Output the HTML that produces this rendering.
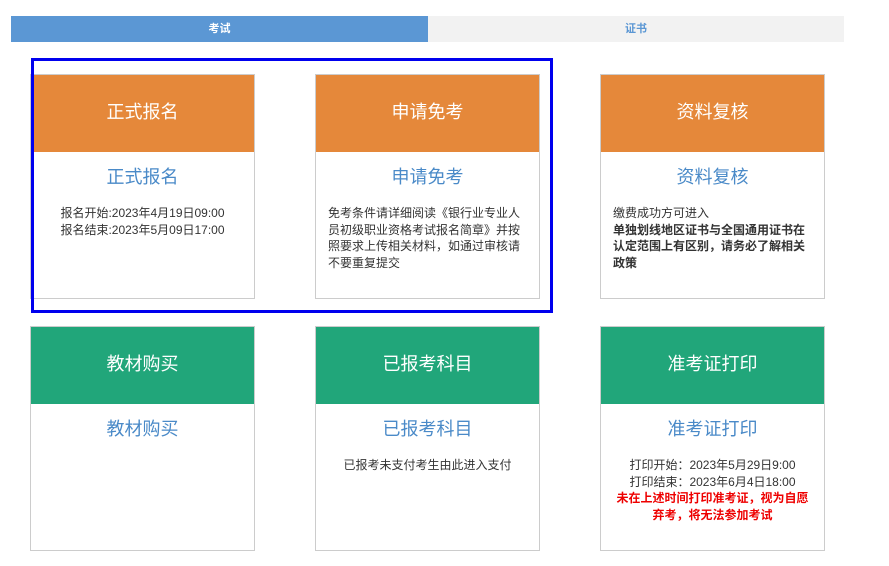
<!DOCTYPE html>
<html><head><meta charset="utf-8"><style>
*{margin:0;padding:0;box-sizing:border-box}
body{width:889px;height:566px;background:#fff;font-family:"Liberation Sans","Noto Sans CJK SC",sans-serif;position:relative;overflow:hidden;color:#333}
.tab{position:absolute;top:16px;height:26px;line-height:26px;text-align:center;font-size:11px;font-weight:bold}
.card{position:absolute;width:225px;height:225px;border:1px solid #ccc;background:#fff}
.hd{height:77px;line-height:74px;text-align:center;color:#fff;font-size:18px}
.or{background:#e5883a}.gr{background:#21a67a}
.sub{text-align:center;color:#4a8ac8;font-size:18px;margin-top:12px;height:26px;line-height:26px}
.bd{font-size:12px;line-height:16.5px;margin-top:15px;padding:0 12px}
.c{text-align:center}
.b{font-weight:bold}
.red{color:#e00;font-weight:bold}
</style></head><body>
<div class="tab" style="left:11px;width:417px;background:#5b97d4;color:#fff">考试</div>
<div class="tab" style="left:428px;width:416px;background:#f2f2f2;color:#5b97d4">证书</div>

<div class="card" style="left:30px;top:74px"><div class="hd or">正式报名</div><div class="sub">正式报名</div>
<div class="bd c">报名开始:2023年4月19日09:00<br>报名结束:2023年5月09日17:00</div></div>
<div class="card" style="left:315px;top:74px"><div class="hd or">申请免考</div><div class="sub">申请免考</div>
<div class="bd">免考条件请详细阅读《银行业专业人员初级职业资格考试报名简章》并按照要求上传相关材料，如通过审核请不要重复提交</div></div>
<div class="card" style="left:600px;top:74px"><div class="hd or">资料复核</div><div class="sub">资料复核</div>
<div class="bd">缴费成功方可进入<br><span class="b">单独划线地区证书与全国通用证书在认定范围上有区别，请务必了解相关政策</span></div></div>

<div class="card" style="left:30px;top:326px"><div class="hd gr">教材购买</div><div class="sub">教材购买</div></div>
<div class="card" style="left:315px;top:326px"><div class="hd gr">已报考科目</div><div class="sub">已报考科目</div>
<div class="bd c">已报考未支付考生由此进入支付</div></div>
<div class="card" style="left:600px;top:326px"><div class="hd gr">准考证打印</div><div class="sub">准考证打印</div>
<div class="bd c">打印开始：2023年5月29日9:00<br>打印结束：2023年6月4日18:00<br><span class="red">未在上述时间打印准考证，视为自愿弃考，将无法参加考试</span></div></div>

<div style="position:absolute;left:31px;top:58px;width:522px;height:255px;border:3px solid #0000ee"></div>
</body></html>
